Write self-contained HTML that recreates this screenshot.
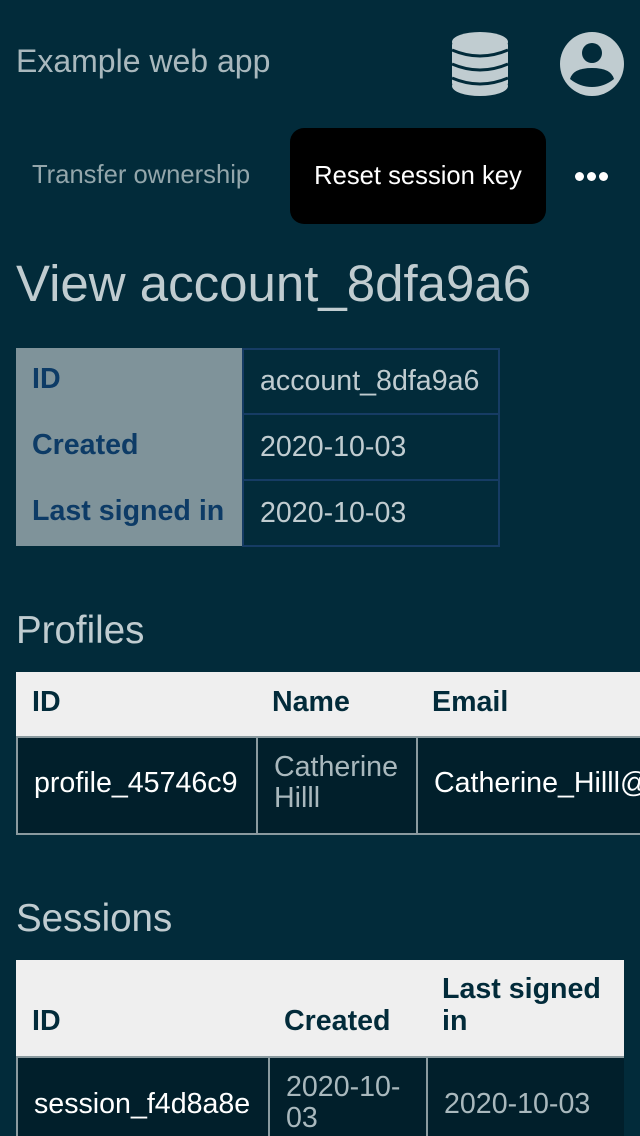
<!DOCTYPE html>
<html><head><style>
*{margin:0;padding:0;box-sizing:border-box}
html,body{width:640px;height:1136px;overflow:hidden}
body{background:#022b3a;font-family:"Liberation Sans",sans-serif;position:relative;color:#c0ccd0}
.a{position:absolute}
.cell{position:absolute;display:flex;align-items:center;padding-left:16px;font-size:28.6px}
.b{font-weight:bold}
</style></head><body>
<div class="a" style="left:16px;top:43px;font-size:32px;color:#a9b8bd">Example web app</div>
<svg class="a" style="left:450px;top:31px" width="60" height="66" viewBox="0 0 60 66">
<g fill="#c0ccd0"><ellipse cx="30" cy="11" rx="28" ry="10"/><rect x="2" y="11" width="56" height="44" rx="3"/><ellipse cx="30" cy="55" rx="28" ry="10"/></g>
<g fill="none" stroke="#022b3a" stroke-width="3"><path d="M2 19 Q30 31 58 19"/><path d="M2 33 Q30 45 58 33"/><path d="M2 47 Q30 59 58 47"/></g></svg>
<svg class="a" style="left:559px;top:31px" width="66" height="66" viewBox="0 0 66 66">
<circle cx="33" cy="33" r="32" fill="#c0ccd0"/><circle cx="33" cy="22" r="10" fill="#022b3a"/><path d="M11 48 Q14 37 33 37 Q52 37 55 48 Q45 56 33 56 Q21 56 11 48Z" fill="#022b3a"/></svg>
<div class="a" style="left:32px;top:161px;font-size:25.6px;color:#93a6ab">Transfer ownership</div>
<div class="a" style="left:290px;top:128px;width:256px;height:96px;background:#000;border-radius:14px;color:#fff;font-size:25.6px;display:flex;align-items:center;justify-content:center">Reset session key</div>
<div class="a" style="left:575px;top:172px;display:flex;gap:3px"><i style="width:9px;height:9px;border-radius:50%;background:#fff"></i><i style="width:9px;height:9px;border-radius:50%;background:#fff"></i><i style="width:9px;height:9px;border-radius:50%;background:#fff"></i></div>
<div class="a" style="left:16px;top:254px;font-size:51px;color:#c0ccd0">View account_8dfa9a6</div>
<div class="a" style="left:16px;top:348px;width:226px;height:198px;background:#7f939a"></div>
<div class="cell b" style="left:16px;top:346px;width:226px;height:66px;color:#0d3b66">ID</div>
<div class="cell b" style="left:16px;top:412px;width:226px;height:66px;color:#0d3b66">Created</div>
<div class="cell b" style="left:16px;top:478px;width:226px;height:66px;color:#0d3b66">Last signed in</div>
<div class="cell" style="left:242px;top:348px;width:258px;height:67px;border:2px solid #163c64">account_8dfa9a6</div>
<div class="cell" style="left:242px;top:413px;width:258px;height:68px;border:2px solid #163c64">2020-10-03</div>
<div class="cell" style="left:242px;top:479px;width:258px;height:68px;border:2px solid #163c64">2020-10-03</div>
<div class="a" style="left:16px;top:609px;font-size:38.5px">Profiles</div>
<div class="a" style="left:16px;top:672px;width:624px;height:64px;background:#efefef"></div>
<div class="cell b" style="left:16px;top:670px;height:64px;color:#022b3a">ID</div>
<div class="cell b" style="left:256px;top:670px;height:64px;color:#022b3a">Name</div>
<div class="cell b" style="left:416px;top:670px;height:64px;color:#022b3a">Email</div>
<div class="a" style="left:16px;top:736px;width:624px;height:99px;background:#011f2b;border:2px solid #8a9a9f;border-right:none"></div>
<div class="a" style="left:256px;top:736px;width:2px;height:99px;background:#8a9a9f"></div>
<div class="a" style="left:416px;top:736px;width:2px;height:99px;background:#8a9a9f"></div>
<div class="cell" style="left:18px;top:734px;height:99px;color:#fff">profile_45746c9</div>
<div class="a" style="left:274px;top:752px;font-size:28.6px;line-height:31px;color:#a9b8bd">Catherine<br>Hilll</div>
<div class="a" style="left:418px;top:736px;width:222px;height:99px;overflow:hidden"><div class="cell" style="left:0;top:-2px;height:99px;color:#fff;white-space:nowrap">Catherine_Hilll@example.com</div></div>
<div class="a" style="left:16px;top:897px;font-size:38.5px">Sessions</div>
<div class="a" style="left:16px;top:960px;width:608px;height:96px;background:#efefef"></div>
<div class="a b" style="left:32px;top:1005px;font-size:28.6px;color:#022b3a">ID</div>
<div class="a b" style="left:284px;top:1005px;font-size:28.6px;color:#022b3a">Created</div>
<div class="a b" style="left:442px;top:973px;font-size:28.6px;line-height:32px;color:#022b3a">Last signed<br>in</div>
<div class="a" style="left:16px;top:1056px;width:608px;height:90px;background:#011f2b;border:2px solid #8a9a9f;border-right:none"></div>
<div class="a" style="left:268px;top:1056px;width:2px;height:90px;background:#8a9a9f"></div>
<div class="a" style="left:426px;top:1056px;width:2px;height:90px;background:#8a9a9f"></div>
<div class="a" style="left:34px;top:1088px;font-size:28.6px;color:#fff">session_f4d8a8e</div>
<div class="a" style="left:286px;top:1072px;font-size:28.6px;line-height:31px;color:#a9b8bd">2020-10-<br>03</div>
<div class="a" style="left:444px;top:1088px;font-size:28.6px;color:#a9b8bd">2020-10-03</div>
</body></html>
